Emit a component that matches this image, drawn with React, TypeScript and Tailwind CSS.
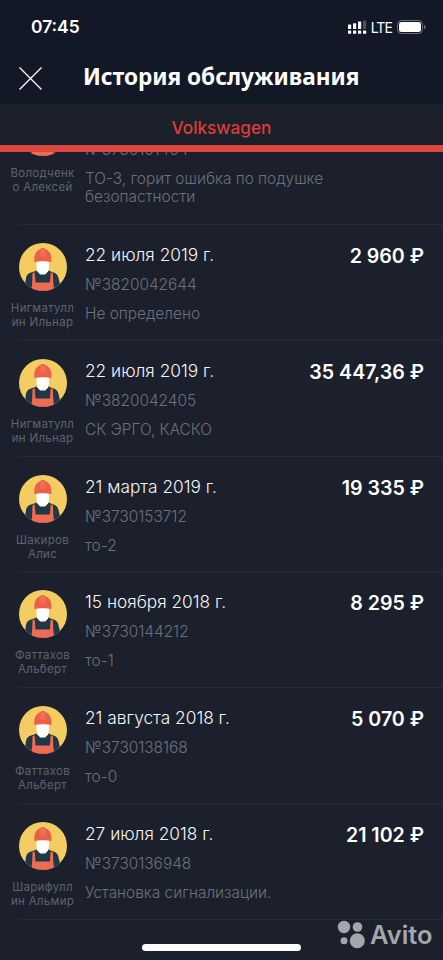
type Visit = {
    date: string
    number: string
    note: string
    price: string
    master: string[]
}

const visits: Visit[] = [
    { date: "22 июля 2019 г.", number: "№3820042644", note: "Не определено", price: "2 960 ₽", master: ["Нигматулл", "ин Ильнар"] },
    { date: "22 июля 2019 г.", number: "№3820042405", note: "СК ЭРГО, КАСКО", price: "35 447,36 ₽", master: ["Нигматулл", "ин Ильнар"] },
    { date: "21 марта 2019 г.", number: "№3730153712", note: "то-2", price: "19 335 ₽", master: ["Шакиров", "Алис"] },
    { date: "15 ноября 2018 г.", number: "№3730144212", note: "то-1", price: "8 295 ₽", master: ["Фаттахов", "Альберт"] },
    { date: "21 августа 2018 г.", number: "№3730138168", note: "то-0", price: "5 070 ₽", master: ["Фаттахов", "Альберт"] },
    { date: "27 июля 2018 г.", number: "№3730136948", note: "Установка сигнализации.", price: "21 102 ₽", master: ["Шарифулл", "ин Альмир"] },
]

const MasterIcon = () => {
    return <svg viewBox="0 0 48 48" className="size-12 shrink-0">
        <defs>
            <clipPath id="face">
                <circle cx="24" cy="24" r="24" />
            </clipPath>
        </defs>
        <g clipPath="url(#face)">
            <rect width="48" height="48" fill="#f3cd62" />
            <path d="M18 27.500h11.500l5 2c3 1 4.200 2.500 4.900 5L42.500 48H5l2.100-13.500c.6-2.500 1.900-4 4.900-5z" fill="#203746" />
            <path d="M17.500 18h12.400v6.500l-.8 4-2.900 3h-5l-2.900-3-.8-4z" fill="#fff" />
            <path d="M13.500 30l2.200-.8.800 10.300h14.400l.8-10.300 2.200.8.400 9.500 1 9H12.200l1-9z" fill="#ec6b52" />
            <path d="M15.300 19.300v-3.800c0-5 3-8.500 6.200-9.500.5-.8 1-1 2.300-1s1.900.2 2.400 1c3.300 1 6.200 4.500 6.200 9.500v3.800c-2.500-.8-5.500-1-8.600-1s-6 .2-8.500 1z" fill="#ec6048" />
            <path d="M21.300 6h5v7.500h-5z" fill="#f07055" />
        </g>
    </svg>
}

const Master = ({ lines }: { lines: string[] }) => {
    return <div className="flex w-[85px] shrink-0 flex-col items-center">
        <MasterIcon />
        <div className="flex flex-col items-center pt-[10px] text-[11.5px] leading-[14px] tracking-[0.3px] whitespace-nowrap text-[#5f626c]">
            {lines.map((line) => <span key={line}>{line}</span>)}
        </div>
    </div>
}

const Row = ({ visit }: { visit: Visit }) => {
    return <div className="h-[115.8px]">
        <div className="flex h-full pt-[18px]">
            <Master lines={visit.master} />
            <div className="flex-1 whitespace-nowrap">
                <div className="text-[17.3px] leading-6 font-light text-[#f4f5f7]">{visit.date}</div>
                <div className="pt-[9px] text-[15.4px] leading-[18px] font-light text-[#6d7079]">{visit.number}</div>
                <div className="pt-[11px] text-[15.4px] leading-[18px] font-light text-[#6d7079]">{visit.note}</div>
            </div>
            <div className="pt-px pr-[19px] text-[19.6px] leading-6 font-semibold whitespace-nowrap text-white">{visit.price}</div>
        </div>
        <div className="-mt-px ml-[19px] h-px bg-[#272b37]" />
    </div>
}

const StatusBar = () => {
    return <div className="flex h-[54px] items-center justify-between pr-[17px] pl-[31px] text-white">
        <div className="text-[17.4px] font-semibold">07:45</div>
        <div className="flex items-center">
            <svg width="20" height="14" viewBox="0 0 20 14" fill="#fff">
                <rect x="1" y="4.500" width="3.200" height="4.500" rx=".5" />
                <rect x="6" y="3.300" width="3.200" height="5.700" rx=".5" />
                <rect x="11" y="1.500" width="3.200" height="7.500" rx=".5" />
                <rect x="16" y=".5" width="3.200" height="8.500" rx=".5" opacity=".25" />
                <rect x="1" y="10.500" width="3.200" height="3.200" rx=".5" />
                <rect x="6" y="10.500" width="3.200" height="3.200" rx=".5" />
                <rect x="11" y="10.500" width="3.200" height="3.200" rx=".5" />
                <rect x="16" y="10.500" width="3.200" height="3.200" rx=".5" />
            </svg>
            <div className="pl-1 text-[14px] tracking-[-0.9px]">LTE</div>
            <svg width="29" height="14" viewBox="0 0 29 14" className="ml-[5px]">
                <rect x=".5" y=".5" width="25" height="13" rx="3.800" fill="none" stroke="#6b6e79" />
                <rect x="2" y="2" width="22" height="10" rx="2.300" fill="#fff" />
                <path d="M27 4.700c1.100.5 1.600 1.300 1.600 2.300s-.5 1.800-1.600 2.300z" fill="#6b6e79" />
            </svg>
        </div>
    </div>
}

const Avito = () => {
    return <div className="absolute top-[920px] left-[337px] flex items-center text-[#a5a6ab]">
        <svg width="28" height="29" viewBox="0 0 28 29" fill="currentColor">
            <circle cx="7" cy="7" r="6.200" />
            <circle cx="20.500" cy="7" r="4.800" />
            <circle cx="7" cy="20.700" r="3.500" />
            <circle cx="20.300" cy="20.700" r="7.500" />
        </svg>
        <div className="pl-[5px] text-[25.4px] leading-7 font-semibold">Avito</div>
    </div>
}

export default function App() {
    return <div className="relative flex h-[960px] w-[443px] flex-col overflow-hidden bg-[#1c202c] font-['Inter','Liberation_Sans',sans-serif]">
        <div className="h-[104px] shrink-0 bg-[#131827]">
            <StatusBar />
            <div className="flex h-[48px] items-center pl-[19px]">
                <svg width="23" height="23" viewBox="0 0 23 23" stroke="#fff" strokeWidth="1.300">
                    <path d="M.5.5l22 22M22.500.5l-22 22" />
                </svg>
                <div className="-mt-[3px] pl-[41px] font-['Noto_Sans',sans-serif] text-[22.6px] font-bold whitespace-nowrap text-white">История обслуживания</div>
            </div>
        </div>
        <div className="flex h-[48px] shrink-0 items-center justify-center border-b-[7px] border-[#dd4640] bg-[#1b202b] pt-[7px] text-[17.2px] font-medium text-[#dc3d37]">
            Volkswagen
        </div>
        <div className="flex-1 overflow-hidden">
            <div className="-mt-[61px] h-[134px]">
                <div className="flex h-full pt-[17px]">
                    <Master lines={["Володченк", "о Алексей"]} />
                    <div className="w-[260px] pt-[33px]">
                        <div className="text-[15.4px] leading-[18px] font-light text-[#6d7079]">№3730161464</div>
                        <div className="pt-[11px] text-[15.4px] leading-[18px] font-light text-[#6d7079]">ТО-3, горит ошибка по подушке безопастности</div>
                    </div>
                </div>
                <div className="-mt-px ml-[19px] h-px bg-[#272b37]" />
            </div>
            {visits.map((visit) => <Row key={visit.number} visit={visit} />)}
        </div>
        <div className="absolute top-[944px] left-[142px] h-[7px] w-[159px] rounded-full bg-white" />
        <Avito />
    </div>
}
